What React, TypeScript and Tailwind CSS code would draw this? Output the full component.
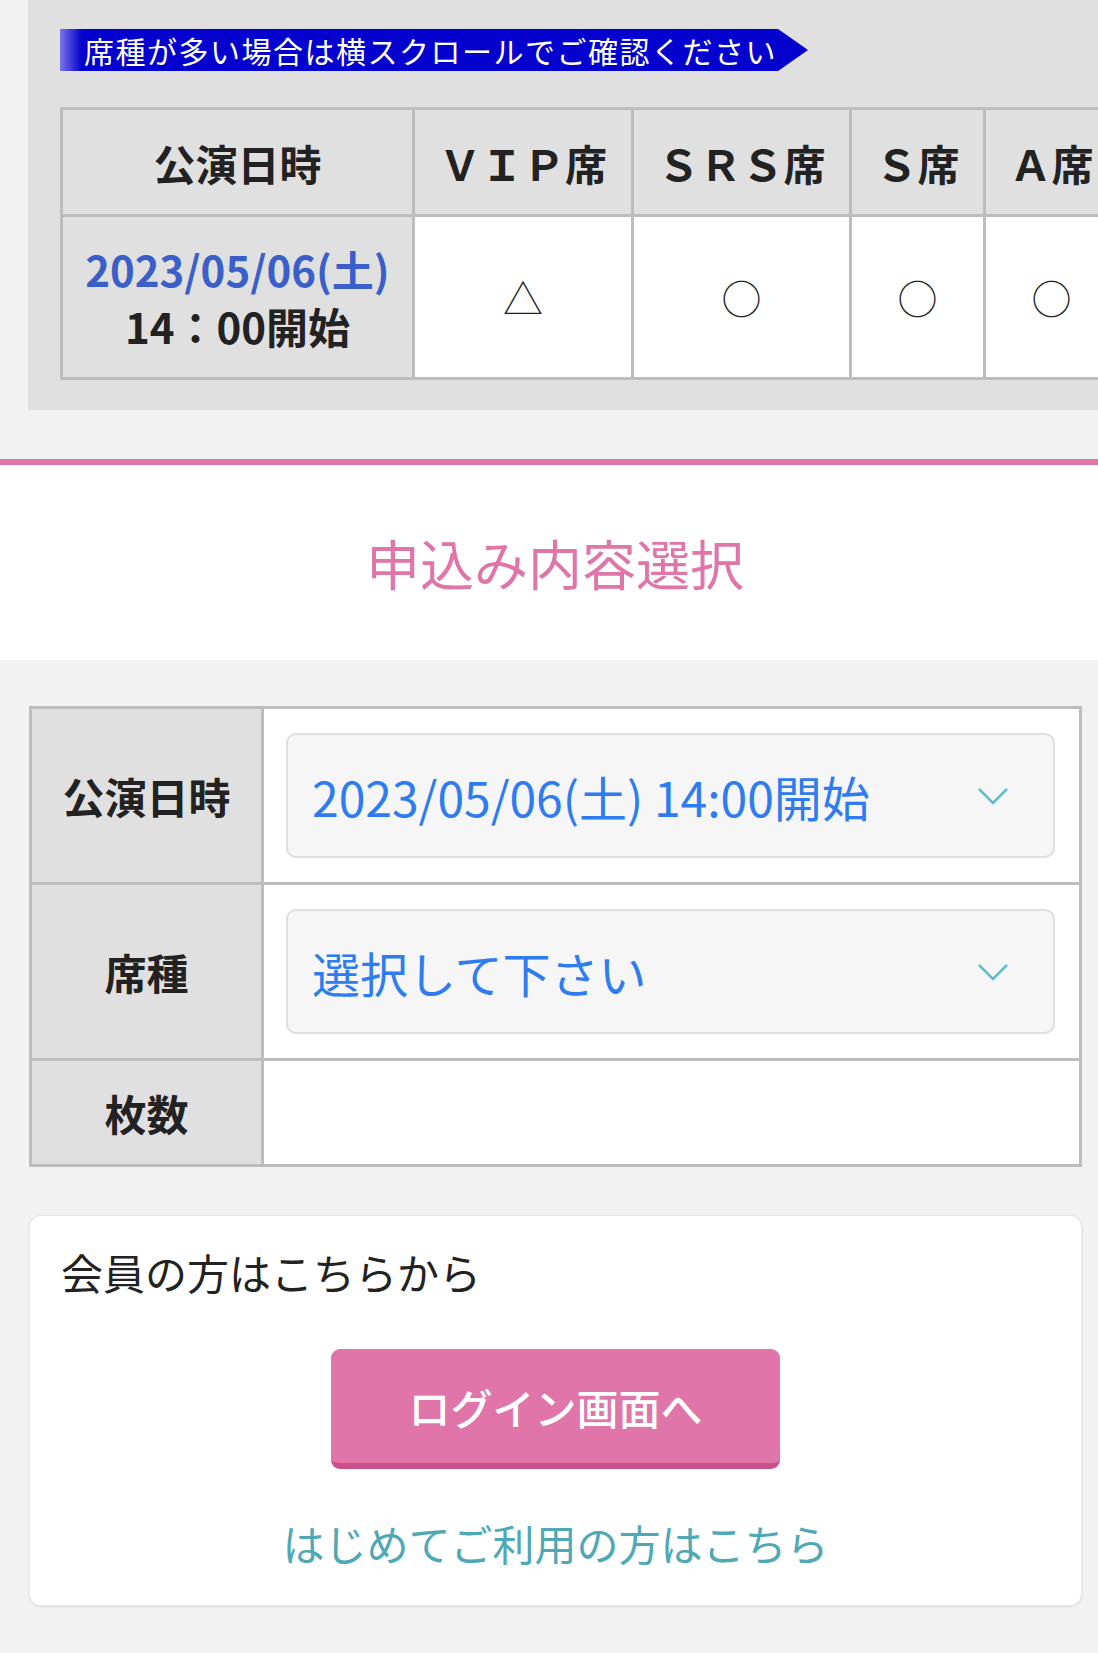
import React from "react";

const jp = "font-['Noto_Sans_CJK_JP','Noto_Sans',sans-serif]";

const Chevron: React.FC = () => (
  <svg width="32" height="18" viewBox="0 0 32 18" fill="none">
    <polyline points="2,2 16,16 30,2" stroke="#5fbfc8" strokeWidth="2.5" />
  </svg>
);

const SelectBox: React.FC<{ label: string }> = ({ label }) => (
  <div className="flex h-[125px] items-center justify-between rounded-[10px] border-2 border-[#dedede] bg-[#f6f6f6] pl-6 pr-[44px]">
    <span className="text-[48px] leading-none text-[#2f7cf0]">{label}</span>
    <Chevron />
  </div>
);

const App: React.FC = () => {
  const seats = [
    { name: "ＶＩＰ席", mark: "△", w: "w-[219px]" },
    { name: "ＳＲＳ席", mark: "○", w: "w-[218px]" },
    { name: "Ｓ席", mark: "○", w: "w-[134px]" },
    { name: "Ａ席", mark: "○", w: "w-[134px]" },
  ];

  return (
    <div className={`${jp} min-h-[1653px] w-[1098px] overflow-hidden bg-[#f2f2f2] text-[#222]`}>
      {/* scrollable seat table */}
      <div className="ml-[28px] overflow-hidden bg-[#e0e0e0] pb-[30px] pl-[32px] pt-[29px]">
        <div className="relative flex h-[42px] w-[748px] items-center bg-[linear-gradient(90deg,#7a74e6_0px,#0400cd_22px)] pl-[24px] [clip-path:polygon(0_0,96%_0,100%_50%,96%_100%,0_100%)]">
          <span className="text-[30px] leading-none tracking-[1.5px] text-white">
            席種が多い場合は横スクロールでご確認ください
          </span>
        </div>

        <table className="mt-[36px] w-[1057px] table-fixed border-collapse">
          <thead>
            <tr className="h-[107px] bg-[#e0e0e0]">
              <th className="w-[352px] border-[3px] border-[#bdbdbd] text-[42px] font-bold">公演日時</th>
              {seats.map((s) => (
                <th key={s.name} className={`${s.w} whitespace-nowrap border-[3px] border-[#bdbdbd] text-[42px] font-bold`}>
                  {s.name}
                </th>
              ))}
            </tr>
          </thead>
          <tbody>
            <tr className="h-[163px]">
              <td className="border-[3px] border-[#bdbdbd] bg-[#e0e0e0] text-center text-[42px] font-bold leading-[57px]">
                <div className="text-[#3b5fc8]">2023/05/06(土)</div>
                <div>14：00開始</div>
              </td>
              {seats.map((s) => (
                <td key={s.name} className="border-[3px] border-[#bdbdbd] bg-white text-center text-[40px] font-light text-[#222]">
                  {s.mark}
                </td>
              ))}
            </tr>
          </tbody>
        </table>
      </div>

      {/* section heading */}
      <div className="mt-[49px] border-t-[6px] border-[#e075a8] bg-white">
        <h2 className="flex h-[195px] items-center justify-center pl-[12px] text-[54px] font-normal leading-none text-[#e075a8]">
          申込み内容選択
        </h2>
      </div>

      {/* form */}
      <div className="pl-[29px] pr-[16px] pt-[46px]">
        <table className="w-full table-fixed border-collapse">
          <tbody>
            <tr className="h-[176px]">
              <th className="w-[232px] border-[3px] border-[#bdbdbd] bg-[#e0e0e0] text-[42px] font-bold">公演日時</th>
              <td className="border-[3px] border-[#bdbdbd] bg-white pl-[22px] pr-[24px]">
                <SelectBox label="2023/05/06(土) 14:00開始" />
              </td>
            </tr>
            <tr className="h-[176px]">
              <th className="border-[3px] border-[#bdbdbd] bg-[#e0e0e0] text-[42px] font-bold">席種</th>
              <td className="border-[3px] border-[#bdbdbd] bg-white pl-[22px] pr-[24px]">
                <SelectBox label="選択して下さい" />
              </td>
            </tr>
            <tr className="h-[106px]">
              <th className="border-[3px] border-[#bdbdbd] bg-[#e0e0e0] text-[42px] font-bold">枚数</th>
              <td className="border-[3px] border-[#bdbdbd] bg-white"></td>
            </tr>
          </tbody>
        </table>

        <div className="mt-[48px] flex h-[391px] flex-col rounded-[12px] border border-[#e6e6e6] bg-white px-[31px] pt-[28px] shadow-[0_1px_3px_rgba(0,0,0,0.08)]">
          <p className="text-[42px] leading-[56px] text-[#222]">会員の方はこちらから</p>
          <button className="mx-auto mt-[49px] h-[120px] w-[449px] rounded-[9px] border-b-[6px] border-[#c9508a] bg-[#df75a8] text-[42px] font-medium text-white">
            ログイン画面へ
          </button>
          <a className="mt-[46px] text-center text-[42px] leading-[56px] text-[#4fa8b6]">はじめてご利用の方はこちら</a>
        </div>
      </div>
    </div>
  );
};

export default App;
